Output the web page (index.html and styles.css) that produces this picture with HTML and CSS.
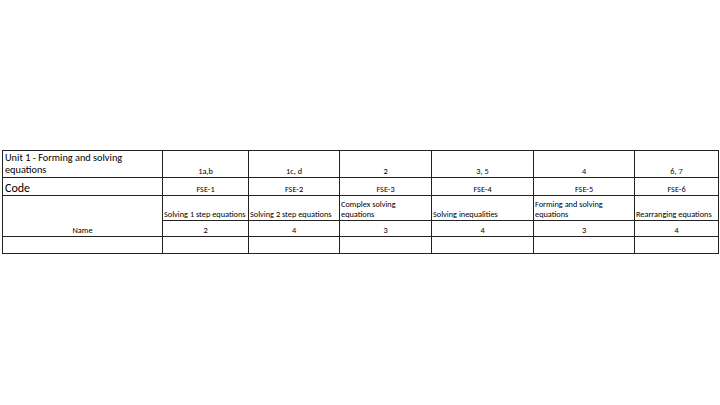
FILE: index.html
```html
<!DOCTYPE html>
<html>
<head>
<meta charset="utf-8">
<link rel="stylesheet" href="styles.css">
</head>
<body>
<table class="sheet">
  <colgroup>
    <col class="c1"><col class="c2"><col class="c3"><col class="c4"><col class="c5"><col class="c6"><col class="c7">
  </colgroup>
  <tr class="r1">
    <td class="title">Unit 1 - Forming and solving<br>equations</td>
    <td class="ctr">1a,b</td>
    <td class="ctr">1c, d</td>
    <td class="ctr">2</td>
    <td class="ctr">3, 5</td>
    <td class="ctr">4</td>
    <td class="ctr">6, 7</td>
  </tr>
  <tr class="r2">
    <td class="code">Code</td>
    <td class="ctr">FSE-1</td>
    <td class="ctr">FSE-2</td>
    <td class="ctr">FSE-3</td>
    <td class="ctr">FSE-4</td>
    <td class="ctr">FSE-5</td>
    <td class="ctr">FSE-6</td>
  </tr>
  <tr class="r3">
    <td class="name" rowspan="2">Name</td>
    <td class="lft">Solving 1 step equations</td>
    <td class="lft">Solving 2 step equations</td>
    <td class="lft">Complex solving<br>equations</td>
    <td class="lft">Solving inequalities</td>
    <td class="lft">Forming and solving<br>equations</td>
    <td class="lft">Rearranging equations</td>
  </tr>
  <tr class="r4">
    <td class="ctr">2</td>
    <td class="ctr">4</td>
    <td class="ctr">3</td>
    <td class="ctr">4</td>
    <td class="ctr">3</td>
    <td class="ctr">4</td>
  </tr>
  <tr class="r5">
    <td></td><td></td><td></td><td></td><td></td><td></td><td></td>
  </tr>
</table>
</body>
</html>
```
FILE: styles.css
```css
html, body {
  margin: 0;
  padding: 0;
  background: #fff;
}
body {
  padding: 150px 0 0 2px;
  font-family: Carlito, Lato, "Liberation Sans", sans-serif;
  color: #000;
}
.sheet {
  border-collapse: collapse;
  table-layout: fixed;
  width: 716px;
}
.sheet td {
  border: 1px solid #222;
  padding: 0 2px 1px 2px;
  vertical-align: bottom;
  font-size: 8.3px;
  line-height: 10px;
  white-space: nowrap;
  overflow: hidden;
}
.c1 { width: 160px; }
.c2 { width: 86px; }
.c3 { width: 91px; }
.c4 { width: 92px; }
.c5 { width: 102px; }
.c6 { width: 101px; }
.c7 { width: 84px; }
.r1 td { height: 25px; }
.r2 td { height: 16px; }
.r3 td { height: 23px; }
.r4 td { height: 14px; }
.r5 td { height: 15px; }
.sheet td.title {
  font-size: 10.3px;
  line-height: 12px;
  padding-left: 2px;
}
.sheet td.code {
  font-size: 12px;
  line-height: 14px;
  padding-left: 2px;
  padding-bottom: 0;
}
.ctr { text-align: center; }
.lft { text-align: left; }
.sheet td.lft { padding-left: 1px; }
.name { text-align: center; }
```
